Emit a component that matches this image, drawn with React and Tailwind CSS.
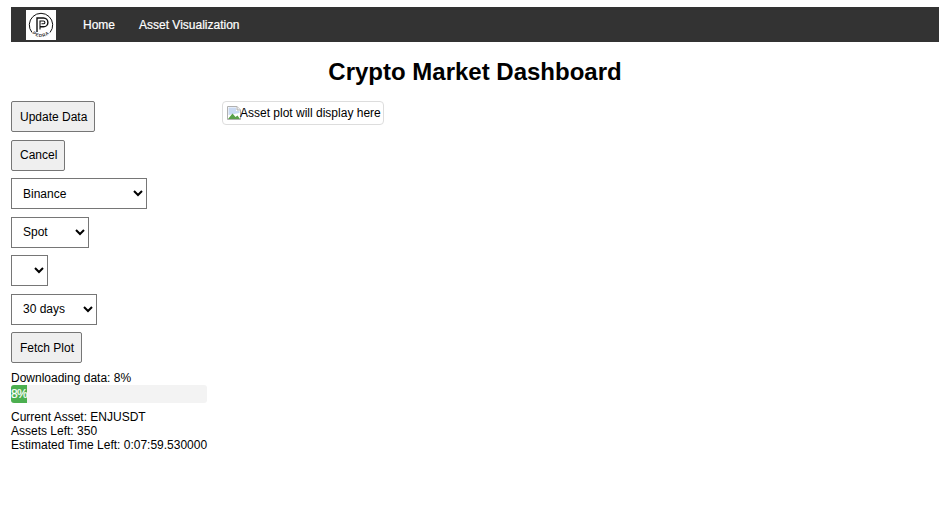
import React from "react";

function Logo() {
  return (
    <div className="w-[30px] h-[30px] bg-white flex items-center justify-center">
      <svg width="30" height="30" viewBox="0 0 30 30" fill="none">
        <defs>
          <path id="logo-arc" d="M4.2 20.5 A12.2 12.2 0 0 0 25.8 20.5" />
        </defs>
        <path d="M6 22.5 A11.7 11.7 0 1 1 24 22.5" stroke="#111" strokeWidth="1" />
        <path d="M11 22 V8 H17.5 a4.4 4.4 0 0 1 0 8.8 H14" stroke="#111" strokeWidth="1.4" />
        <path d="M14 19.5 V11 H17.5 a1.4 1.4 0 0 1 0 2.8 H15.5" stroke="#111" strokeWidth="1.1" />
        <text fontSize="4.5" fontWeight="700" fill="#333" letterSpacing="0.6" fontFamily="Liberation Sans, sans-serif">
          <textPath href="#logo-arc" startOffset="50%" textAnchor="middle">PEDRA</textPath>
        </text>
      </svg>
    </div>
  );
}

function BrokenImage() {
  return (
    <svg width="16" height="16" viewBox="0 0 16 16" className="shrink-0">
      <path d="M0.5 1.5 H10 L13.5 5 V14.5 H0.5 Z" fill="#fff" stroke="#b0b0b0" />
      <path d="M10 1.5 V5 H13.5" fill="#eeeeee" stroke="#b0b0b0" />
      <path d="M1.5 2.5 H9 V6 H12.5 V8 L1.5 10 Z" fill="#c9d9f2" />
      <path d="M1 14 L5.5 8.5 L8.5 12 L10.5 10.5 L13 14 Z" fill="#5aa04a" />
    </svg>
  );
}

function Btn({ children }) {
  return (
    <button className="h-[31px] w-fit pl-2 pr-[7px] bg-[#efefef] border border-[#767676] rounded-[2px] text-black">
      {children}
    </button>
  );
}

function Sel({ width, options }) {
  return (
    <select className={`h-[31px] ${width} pl-[7px] pr-0 bg-white border border-[#767676] text-black`}>
      {options.map((o) => (
        <option key={o}>{o}</option>
      ))}
    </select>
  );
}

export default function App() {
  return (
    <div className="h-[509px] bg-white pt-[7px] pl-[11px] pr-[8px] text-[12px] leading-[14px] text-black overflow-hidden font-['Liberation_Sans',Arial,sans-serif]">
      <nav className="h-[35px] bg-[#333333] flex items-center pl-[15px]">
        <Logo />
        <a className="ml-[27px] text-white [-webkit-text-stroke:0.2px_white]">Home</a>
        <a className="ml-[24px] text-white [-webkit-text-stroke:0.2px_white]">Asset Visualization</a>
      </nav>

      <h1 className="mt-[16px] text-center text-[24px] leading-[28px] font-bold">Crypto Market Dashboard</h1>

      <div className="flex mt-[15px]">
        <div className="w-[196px] shrink-0 flex flex-col">
          <div className="flex flex-col gap-[7.5px]">
            <Btn>Update Data</Btn>
            <Btn>Cancel</Btn>
            <Sel width="w-[136px]" options={["Binance"]} />
            <Sel width="w-[78px]" options={["Spot"]} />
            <Sel width="w-[37px]" options={[""]} />
            <Sel width="w-[86px]" options={["30 days"]} />
            <Btn>Fetch Plot</Btn>
          </div>
          <p className="mt-[8px]">Downloading data: 8%</p>
          <div className="h-[18px] bg-[#f3f3f3] rounded-[3px]">
            <div className="w-[16px] h-full bg-[#4caf50] rounded-l-[3px] text-white tracking-[-0.6px] [-webkit-text-stroke:0.2px_white] leading-[18px] whitespace-nowrap">8%</div>
          </div>
          <div className="mt-[7px]">
            <p>Current Asset: ENJUSDT</p>
            <p>Assets Left: 350</p>
            <p className="whitespace-nowrap">Estimated Time Left: 0:07:59.530000</p>
          </div>
        </div>

        <div className="ml-[15px]">
          <div className="flex items-center w-[162px] h-[24px] px-[4px] border border-[#dddddd] rounded-[4px] whitespace-nowrap">
            <BrokenImage />
            <span className="-ml-[3px]">Asset plot will display here</span>
          </div>
        </div>
      </div>
    </div>
  );
}
